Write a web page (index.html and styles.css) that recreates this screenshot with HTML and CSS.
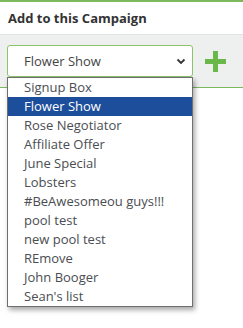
FILE: index.html
```html
<!DOCTYPE html>
<html lang="en">
<head>
    <meta charset="UTF-8">
    <meta name="viewport" content="width=device-width, initial-scale=1.0">
    <title>Add to this Campaign</title>
    <link rel="stylesheet" href="styles.css">
</head>
<body>
    <!-- Panel header -->
    <div class="panel-head">
        <h3>Add to this Campaign</h3>
    </div>

    <!-- Campaign picker -->
    <div class="panel-body">
        <div class="picker">
            <div class="select-box">
                <span>Flower Show</span>
                <svg class="chevron" width="10" height="7" viewBox="0 0 10 7">
                    <path d="M1.5 1.5 L5 5 L8.5 1.5" fill="none" stroke="#333" stroke-width="1.8"/>
                </svg>
            </div>
            <ul class="options">
                <li>Signup Box</li>
                <li class="selected">Flower Show</li>
                <li>Rose Negotiator</li>
                <li>Affiliate Offer</li>
                <li>June Special</li>
                <li>Lobsters</li>
                <li>#BeAwesomeou guys!!!</li>
                <li>pool test</li>
                <li>new pool test</li>
                <li>REmove</li>
                <li>John Booger</li>
                <li>Sean's list</li>
            </ul>
        </div>
        <a href="#" class="add-btn">
            <svg width="21" height="21" viewBox="0 0 21 21">
                <rect x="8" y="0" width="5" height="21" fill="#6ab84a"/>
                <rect x="0" y="8" width="21" height="5" fill="#6ab84a"/>
            </svg>
        </a>
    </div>
</body>
</html>
```

FILE: styles.css
```css
html, body {
    min-height: 100%;
}

body {
    margin: 0;
    min-height: 328px;
    font-family: "Open Sans", Arial, sans-serif;
    background: #fff;
    color: #444;
}

.panel-head {
    border-top: 2px solid #7cb85e;
    border-bottom: 1px solid #e2e4e3;
    padding: 7px 8px 0;
    height: 25px;
}

.panel-head h3 {
    margin: 0;
    font-size: 13px;
    font-weight: 700;
    color: #333;
    line-height: 18px;
}

.panel-body {
    background: #eef0ef;
    border-bottom: 1px solid #7cb85e;
    padding: 10px 0 10px 7px;
    display: flex;
    align-items: center;
    gap: 12px;
}

.picker {
    position: relative;
    width: 186px;
}

.select-box {
    height: 30px;
    border: 1px solid #8cc46c;
    border-radius: 3px;
    background: #fff;
    display: flex;
    align-items: center;
    justify-content: space-between;
    padding: 0 6px 0 16px;
    font-size: 13px;
    color: #444;
}

.chevron {
    margin-top: 1px;
}

/* open dropdown list */
.options {
    position: absolute;
    top: 32px;
    left: 0;
    width: 184px;
    margin: 0;
    padding: 0;
    list-style: none;
    background: #fff;
    border: 1px solid #6f6f6f;
    box-shadow: 2px 3px 5px rgba(0, 0, 0, 0.35);
    z-index: 10;
}

.options li {
    height: 19px;
    line-height: 19px;
    padding-left: 16px;
    font-size: 13px;
    color: #4a4d52;
}

.options li.selected {
    background: #1c4e9b;
    color: #fff;
}

.add-btn {
    display: flex;
    margin-top: 1px;
}
```
